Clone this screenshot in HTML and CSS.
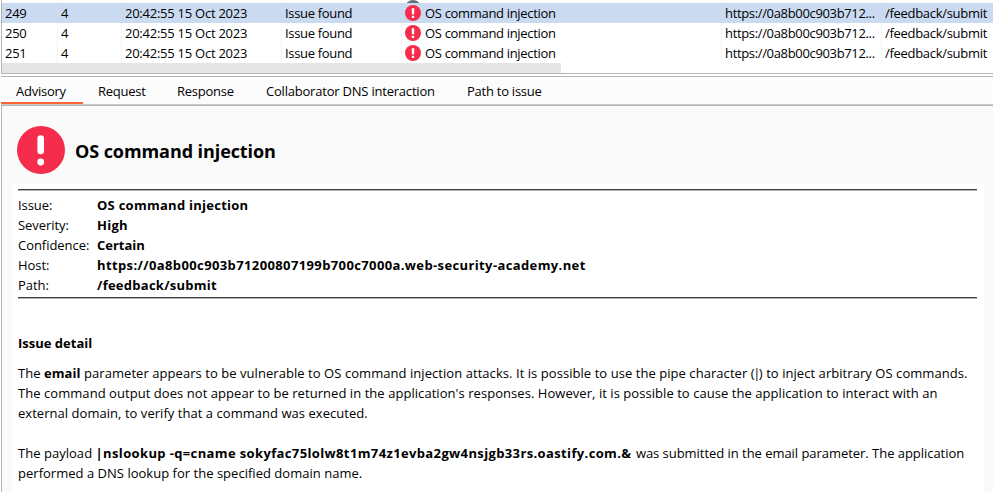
FILE: index.html
```html
<!DOCTYPE html>
<html lang="en">
<head>
<meta charset="utf-8">
<title>Issue activity</title>
<link rel="stylesheet" href="styles.css">
</head>
<body>
<svg class="defs" width="0" height="0"><symbol id="alert" viewBox="0 0 48 48"><circle cx="24" cy="24" r="24"/><path d="M23.7 12.5v12.5" stroke="#fff" stroke-width="6.6" stroke-linecap="round"/><circle cx="23.7" cy="36" r="3.4" fill="#fff"/></symbol>
<symbol id="small" viewBox="0 0 16 16"><circle cx="8" cy="8" r="8"/><path d="M6.8 3.2h2.4v6.1H6.8zM6.8 10.8h2.4V13H6.8z" fill="#fff"/></symbol></svg>
<section class="log">
  <div class="row clipped"><span></span><span></span><span></span><span></span><span class="issue"><svg class="dot gray"><use href="#small"/></svg></span><span></span><span></span></div>
  <div class="row selected"><span>249</span><span>4</span><span class="time">20:42:55 15 Oct 2023</span><span class="type">Issue found</span><span class="issue"><svg class="dot"><use href="#small"/></svg><span class="name">OS command injection</span></span><span class="host">https://0a8b00c903b712...</span><span class="path">/feedback/submit</span></div>
  <div class="row"><span>250</span><span>4</span><span class="time">20:42:55 15 Oct 2023</span><span class="type">Issue found</span><span class="issue"><svg class="dot"><use href="#small"/></svg><span class="name">OS command injection</span></span><span class="host">https://0a8b00c903b712...</span><span class="path">/feedback/submit</span></div>
  <div class="row"><span>251</span><span>4</span><span class="time">20:42:55 15 Oct 2023</span><span class="type">Issue found</span><span class="issue"><svg class="dot"><use href="#small"/></svg><span class="name">OS command injection</span></span><span class="host">https://0a8b00c903b712...</span><span class="path">/feedback/submit</span></div>
  <div class="track"><div class="thumb"></div></div>
</section>
<section class="details">
  <nav class="tabs"><span class="tab active">Advisory</span><span class="tab request">Request</span><span class="tab response">Response</span><span class="tab dns">Collaborator DNS interaction</span><span class="tab topath">Path to issue</span></nav>
  <div class="panel">
    <header class="title"><svg class="badge"><use href="#alert"/></svg><h1>OS command injection</h1></header>
    <main class="content">
      <hr>
      <dl>
        <dt>Issue:</dt><dd>OS command injection</dd>
        <dt>Severity:</dt><dd>High</dd>
        <dt>Confidence:</dt><dd class="sure">Certain</dd>
        <dt>Host:</dt><dd class="url">https://0a8b00c903b71200807199b700c7000a.web-security-academy.net</dd>
        <dt>Path:</dt><dd>/feedback/submit</dd>
      </dl>
      <hr>
      <h2>Issue detail</h2>
      <p><span class="l1">The <b>email</b> parameter appears to be vulnerable to OS command injection attacks. It is possible to use the pipe character (<span class="pipe">|</span>) to inject arbitrary OS commands.</span><br><span class="l2">The command output does not appear to be returned in the application's responses. However, it is possible to cause the application to interact with an</span><br><span class="l3">external domain, to verify that a command was executed.</span></p>
      <p><span class="l4">The payload <b class="payload">|nslookup -q=cname sokyfac75lolw8t1m74z1evba2gw4nsjgb33rs.oastify.com.&amp;</b> <span class="l4b">was submitted in the email parameter. The application</span></span><br><span class="l5">performed a DNS lookup for the specified domain name.</span></p>
    </main>
  </div>
</section>
</body>
</html>
```
FILE: styles.css
```css
* { box-sizing: border-box; }
body { margin: 0; width: 993px; height: 492px; overflow: hidden; background: #fff; color: #000; font: 13px/20px "Open Sans", "Noto Sans", sans-serif; white-space: nowrap; letter-spacing: -0.25px; }
.defs { display: block; height: 0; }
.log { margin-left: 1px; height: 74px; border-left: 1px solid #b4b4b4; border-bottom: 1px solid #b4b4b4; }
.row { display: grid; grid-template-columns: 55px 64px 160px 120px 320px 160px 1fr; height: 20px; }
.row > span { padding-left: 3px; border-left: 1px solid #f4f4f4; }
.row > span:first-child { border-left: 0; }
.row.clipped { height: 3px; overflow: hidden; }
.row.selected { background: #c9daf1; }
.row.selected > span { border-color: #c9daf1; }
.row .issue { display: flex; align-items: center; gap: 4px; }
.dot { width: 16px; height: 16px; flex: none; fill: #f62c4c; }
.dot.gray { fill: #687080; align-self: end; margin-bottom: 2px; }
.type, .name { letter-spacing: -0.32px; }
.host { letter-spacing: -0.34px; }
.path { letter-spacing: -0.3px; }
.track { height: 10px; }
.thumb { width: 559px; height: 10px; background: #e5e5e5; }
.details { margin: 2px 0 0 1px; border-top: 1px solid #b4b4b4; height: 416px; }
.tabs { display: flex; height: 28px; border-top: 2px solid #fff; border-bottom: 1px solid #c8cdcc; background: #fcfcfc; line-height: 25px; }
.tab { padding-left: 15px; height: 25px; }
.active { width: 82px; border-bottom: 2px solid #ff6633; }
.request { width: 79px; }
.response { width: 89px; }
.dns { width: 201px; letter-spacing: -0.21px; }
.panel { height: 387px; border-top: 1px solid #b4b4b4; border-left: 1px solid #b4b4b4; background: #fafafa; }
.title { display: flex; align-items: center; height: 78px; padding: 10px 0 0 15px; gap: 10px; }
.badge { width: 48px; height: 48px; fill: #f62c4c; }
h1 { margin: 2px 0 0; font-size: 18px; line-height: 26px; letter-spacing: -0.08px; }
.content { margin: 0 9px 0 10px; padding: 5px 7px 0 6px; height: 308px; background: #fff; }
hr { height: 2px; margin: 0; border: 0; border-top: 1px solid #404040; background: #b4b4b4; }
dl { display: grid; grid-template-columns: 79px 1fr; margin: 4px 0 2px; }
dt { letter-spacing: -0.05px; }
dd { margin: 0; font-weight: bold; letter-spacing: 0.26px; }
.sure { letter-spacing: 0; }
.url { letter-spacing: 0.38px; }
h2 { margin: 34px 0 10px; font-size: 13px; line-height: 20px; letter-spacing: 0; }
p { margin: 0 0 20px; }
.l1 { letter-spacing: 0.056px; }
.pipe { margin: 0 -1.5px; }
.l2 { letter-spacing: 0.053px; }
.l3 { letter-spacing: 0.04px; }
.l4 { letter-spacing: 0.03px; }
.payload { letter-spacing: 0.37px; }
.l4b { margin-left: 1px; letter-spacing: -0.04px; }
.l5 { letter-spacing: 0.02px; }
```
